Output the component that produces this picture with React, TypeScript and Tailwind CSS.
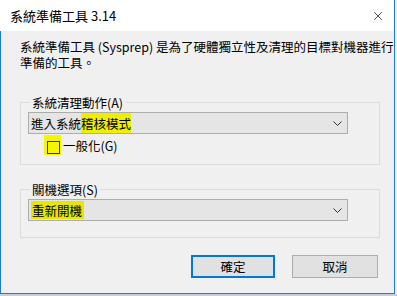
import { X } from 'lucide-react';

const font = "font-['Noto_Sans_CJK_TC','Noto_Sans',sans-serif]";

function Chevron() {
  return (
    <svg width="9" height="5" viewBox="0 0 9 5" className="shrink-0">
      <path d="M0.5 0.5 L4.5 4.5 L8.5 0.5" fill="none" stroke="#333" strokeWidth="1" />
    </svg>
  );
}

function Combo({ children }: { children: React.ReactNode }) {
  return (
    <div className="flex items-center justify-between w-[320px] h-[22px] bg-[#e5e5e5] border border-[#adadad] pl-[2px] pr-[5px]">
      <div className="flex items-center h-full text-[12.5px] leading-[15px] text-black">{children}</div>
      <Chevron />
    </div>
  );
}

export default function App() {
  return (
    <div className={`w-[397px] h-[296px] bg-[#f0f0f0] flex flex-col overflow-hidden ${font}`}>
      <div className="w-[395px] flex flex-col border-r border-[#1a7fd4]">
        {/* title bar */}
        <div className="h-[31px] bg-white flex items-center justify-between pl-[10px] pr-[9px]">
          <span className="text-[13px] leading-[15px] text-black">系統準備工具 3.14</span>
          <X className="w-[14px] h-[14px] text-black" strokeWidth={1.2} />
        </div>

        {/* body */}
        <div className="h-[263px] border-l border-b border-[#1a7fd4] pl-[19px] pt-[8px] flex flex-col">
          <p className="text-[12.5px] leading-[16px] text-black whitespace-nowrap">
            系統準備工具 (Sysprep) 是為了硬體獨立性及清理的目標對機器進行
            <br />
            準備的工具。
          </p>

          <fieldset className="mt-[24px] w-[360px] h-[70px] border border-[#dcdcdc] pl-[7px]">
            <legend className="ml-[2px] px-[2px] text-[12.5px] leading-[15px] text-black">系統清理動作(A)</legend>
            <div className="mt-[2px]">
              <Combo>
                <span>進入系統</span>
                <span className="bg-[#eeee00] h-[20px] flex items-center">稽核模式</span>
              </Combo>
            </div>
            <div className="flex items-center mt-[1px] ml-[16px] h-[20px]">
              <span className="bg-[#f5f500] w-[17px] h-[20px] flex items-center justify-center">
                <span className="w-[13px] h-[13px] border border-[#333] bg-[#f5f500] ml-[2px] mt-[5px]" />
              </span>
              <span className="ml-[2px] text-[12.5px] leading-[15px] text-black">一般化(G)</span>
            </div>
          </fieldset>

          <fieldset className="mt-[17px] w-[360px] h-[56px] border border-[#dcdcdc] pl-[7px]">
            <legend className="ml-[2px] px-[2px] text-[12.5px] leading-[15px] text-black">關機選項(S)</legend>
            <div className="mt-[2px]">
              <Combo>
                <span className="bg-[#e6e600] h-[18px] flex items-center pl-[1px] pr-[2px]">重新開機</span>
              </Combo>
            </div>
          </fieldset>

          <div className="flex mt-[17px] ml-[171px] gap-[17px]">
            <button className="w-[84px] h-[23px] bg-[#e1e1e1] border-2 border-[#0078d7] text-[12.5px] leading-[15px] text-black">
              確定
            </button>
            <button className="w-[86px] h-[23px] bg-[#e1e1e1] border border-[#adadad] text-[12.5px] leading-[15px] text-black">
              取消
            </button>
          </div>
        </div>
      </div>
      <div className="flex-1 bg-[#c9cfd8]" />
    </div>
  );
}
